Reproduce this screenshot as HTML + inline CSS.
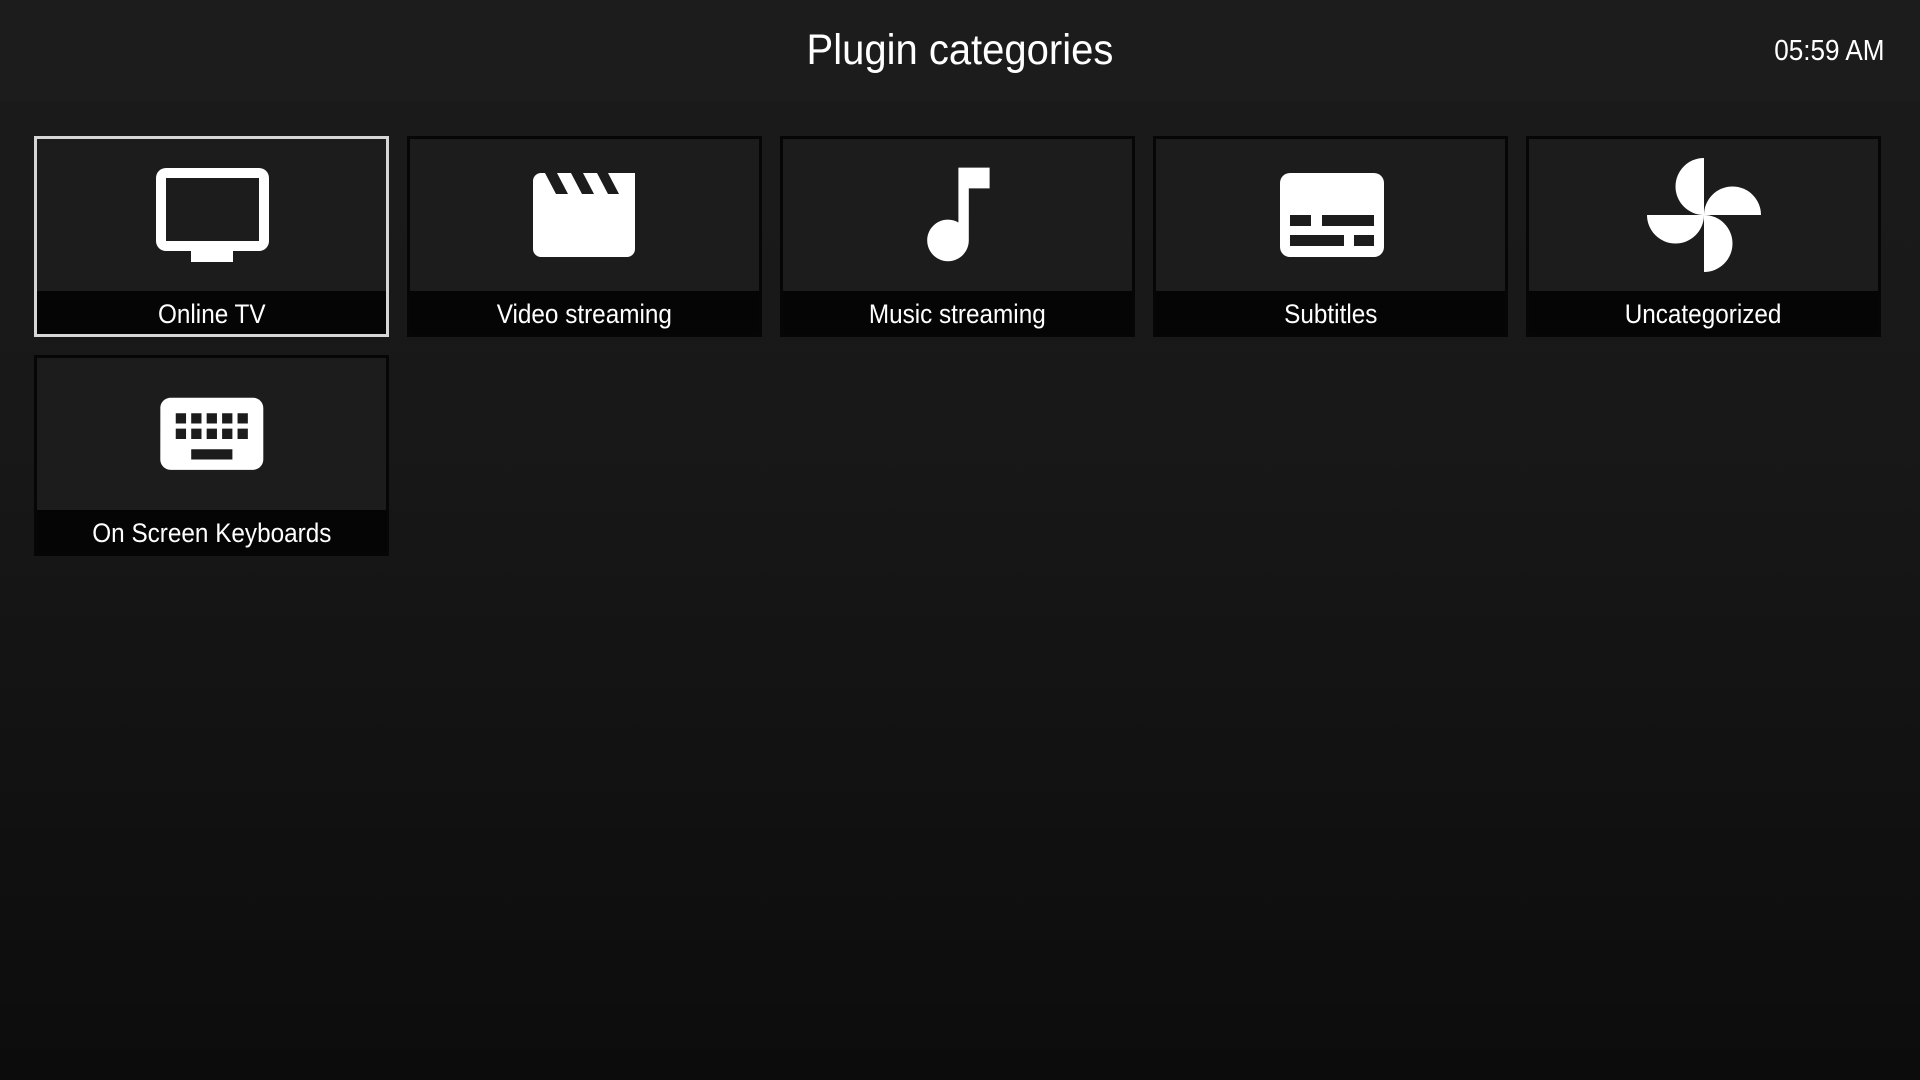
<!DOCTYPE html>
<html><head><meta charset="utf-8"><style>
html,body{margin:0;padding:0}
body{width:1920px;height:1080px;overflow:hidden;background:linear-gradient(#1b1b1b 0%,#181818 40%,#0c0c0c 100%);font-family:"Liberation Sans",sans-serif;color:#fff;position:relative}
.hdr{position:absolute;left:0;top:0;width:1920px;height:102px;background:#1c1c1c}
.title{position:absolute;left:0;width:1920px;top:26px;text-align:center;font-size:43px}
.title span{display:inline-block;transform:scaleX(0.93)}
.clock span,.lbl span{display:inline-block;transform:scaleX(0.9)}
.clock{position:absolute;right:35px;top:35px;font-size:29px}
.clock span{transform-origin:right}
.tile{position:absolute;width:349px;height:195px;background:#1c1c1c;border:3px solid #060606}
.tile.sel{border-color:#d6d6d6}
.lbl{position:absolute;left:0;right:0;bottom:0;height:43px;background:#050505;text-align:center;font-size:27px;line-height:46px}
svg{position:absolute;left:0;top:0}
</style></head><body>
<div class="hdr"></div>
<div class="title"><span>Plugin categories</span></div>
<div class="clock"><span>05:59 AM</span></div>

<div class="tile sel" style="left:34px;top:136px">
<svg width="349" height="195" viewBox="37 139 349 195"><path fill="#fff" fill-rule="evenodd" d="M166 168h93a10 10 0 0 1 10 10v63a10 10 0 0 1-10 10H166a10 10 0 0 1-10-10V178a10 10 0 0 1 10-10zM166 178v63h93V178z"/><rect x="191" y="250" width="42" height="12" fill="#fff"/></svg>
<div class="lbl"><span>Online TV</span></div></div>

<div class="tile" style="left:407px;top:136px">
<svg width="349" height="195" viewBox="410 139 349 195"><path fill="#fff" d="M541 173h4l11 21h12l-11-21h14l11 21h12l-11-21h14l11 21h11l-11-21h27v76a8 8 0 0 1-8 8H541a8 8 0 0 1-8-8V181a8 8 0 0 1 8-8z"/></svg>
<div class="lbl"><span>Video streaming</span></div></div>

<div class="tile" style="left:780px;top:136px">
<svg width="349" height="195" viewBox="783 139 349 195"><g transform="translate(896 152) scale(5.2)"><path fill="#fff" d="M12 3v10.55c-.59-.34-1.27-.55-2-.55-2.21 0-4 1.790-4 4s1.79 4 4 4 4-1.79 4-4V7h4V3h-6z"/></g></svg>
<div class="lbl"><span>Music streaming</span></div></div>

<div class="tile" style="left:1153px;top:136px">
<svg width="349" height="195" viewBox="1156 139 349 195"><g transform="translate(-5 0)"><path fill="#fff" fill-rule="evenodd" d="M1295 173h84a10 10 0 0 1 10 10v64a10 10 0 0 1-10 10h-84a10 10 0 0 1-10-10v-64a10 10 0 0 1 10-10zM1295 215v11h21v-11zM1327 215v11h52v-11zM1295 235v11h54v-11zM1359 235v11h20v-11z"/></g></svg>
<div class="lbl"><span>Subtitles</span></div></div>

<div class="tile" style="left:1526px;top:136px">
<svg width="349" height="195" viewBox="1529 139 349 195"><g fill="#fff"><path d="M1704 158a28.5 28.5 0 0 0 0 57z"/><path d="M1704 215a28.5 28.5 0 0 1 57 0z"/><path d="M1704 215a28.5 28.5 0 0 1 0 57z"/><path d="M1647 215a28.5 28.5 0 0 0 57 0z"/></g></svg>
<div class="lbl"><span>Uncategorized</span></div></div>

<div class="tile" style="left:34px;top:355px">
<svg width="349" height="195" viewBox="37 358 349 195"><g transform="translate(150 372) scale(5.15)"><path fill="#fff" d="M20 5H4c-1.1 0-1.99.9-1.99 2L2 17c0 1.1.9 2 2 2h16c1.1 0 2-.9 2-2V7c0-1.1-.9-2-2-2zm-9 3h2v2h-2V8zm0 3h2v2h-2v-2zM8 8h2v2H8V8zm0 3h2v2H8v-2zm-1 2H5v-2h2v2zm0-3H5V8h2v2zm9 7H8v-2h8v2zm0-4h-2v-2h2v2zm0-3h-2V8h2v2zm3 3h-2v-2h2v2zm0-3h-2V8h2v2z"/></g></svg>
<div class="lbl"><span>On Screen Keyboards</span></div></div>
</body></html>
